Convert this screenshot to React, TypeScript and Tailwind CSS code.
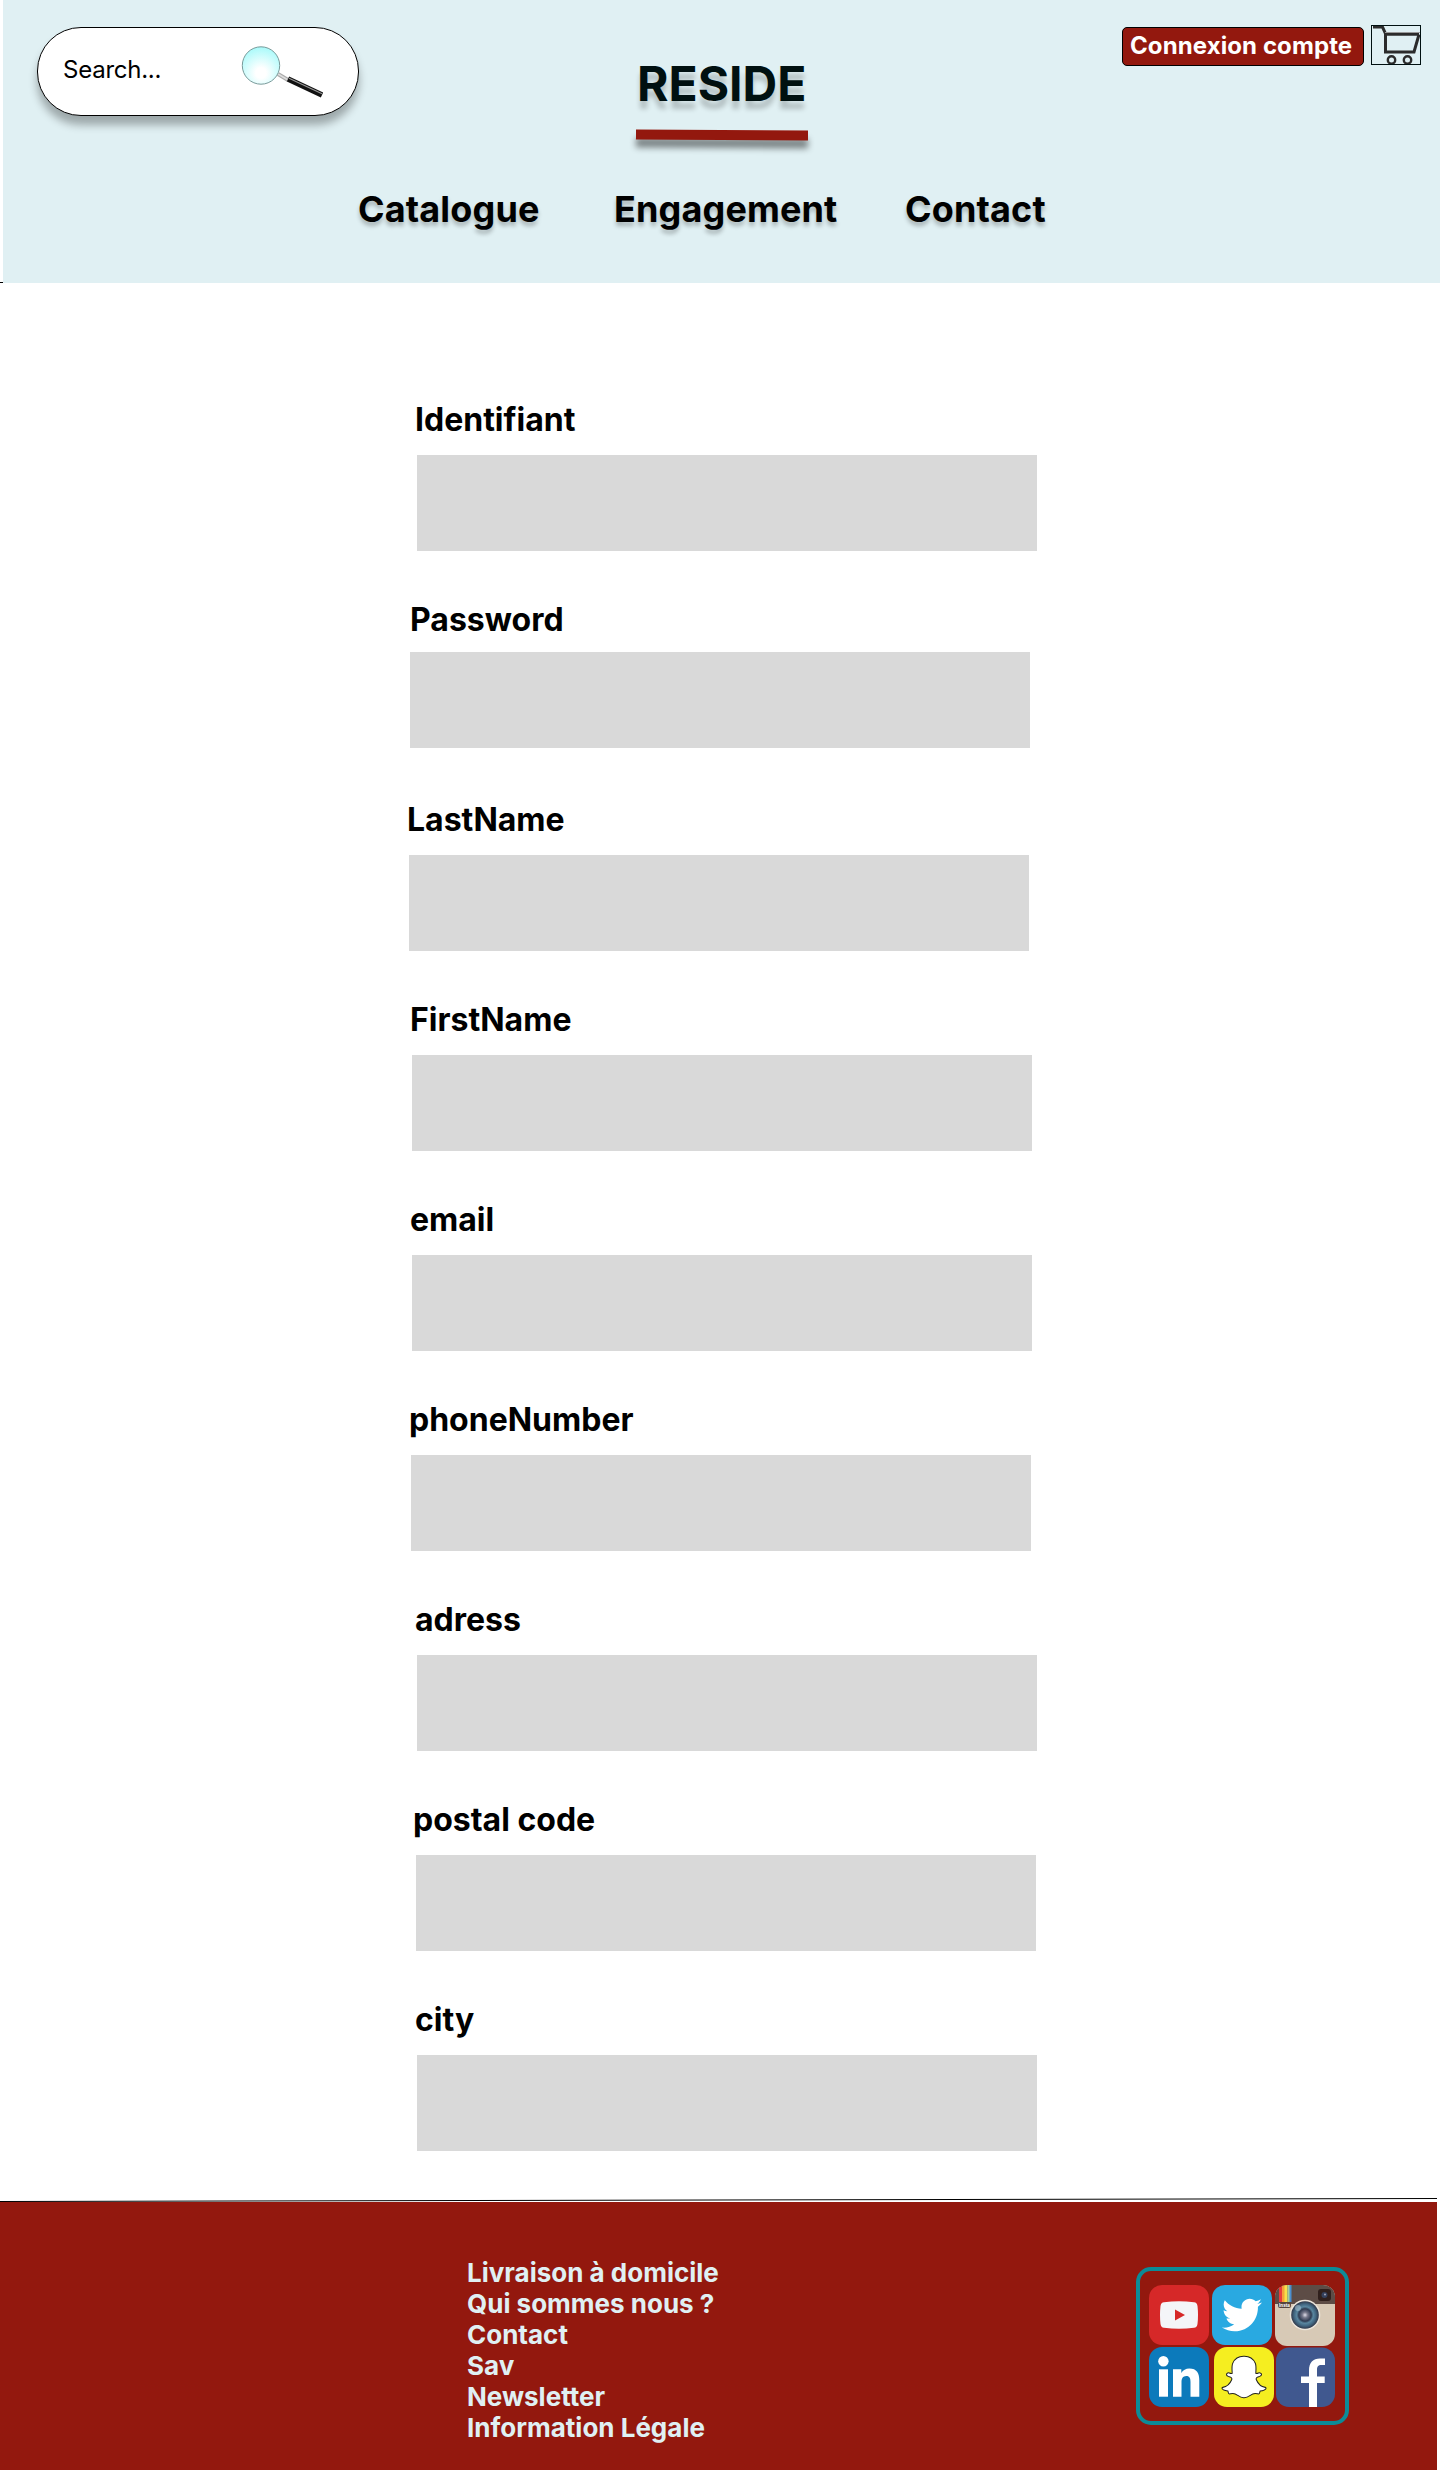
import React from "react";
import { FaTwitter, FaSnapchatGhost } from "react-icons/fa";

const fields = [
  { label: "Identifiant", at: "ml-[415px]", box: "ml-[2px] mt-[15px]" },
  { label: "Password", at: "ml-[410px]", box: "mt-[12px]" },
  { label: "LastName", at: "ml-[407px]", box: "ml-[2px] mt-[15px]" },
  { label: "FirstName", at: "ml-[410px]", box: "ml-[2px] mt-[15px]" },
  { label: "email", at: "ml-[410px]", box: "ml-[2px] mt-[15px]" },
  { label: "phoneNumber", at: "ml-[409px]", box: "ml-[2px] mt-[15px]" },
  { label: "adress", at: "ml-[415px]", box: "ml-[2px] mt-[15px]" },
  { label: "postal code", at: "ml-[413px]", box: "ml-[3px] mt-[15px]" },
  { label: "city", at: "ml-[415px]", box: "ml-[2px] mt-[15px]" },
];

const footerLinks = ["Livraison à domicile", "Qui sommes nous ?", "Contact", "Sav", "Newsletter", "Information Légale"];

function Magnifier() {
  return (
    <svg width="84" height="54" viewBox="0 0 84 54" className="ml-[79px] mt-[17px] shrink-0">
      <defs>
        <radialGradient id="lens" cx="0.5" cy="0.7" r="0.7">
          <stop offset="0.2" stopColor="#fff" />
          <stop offset="1" stopColor="#a8fafa" />
        </radialGradient>
      </defs>
      <path d="M37 29l10 6" stroke="#aaa" strokeWidth="4" />
      <path d="M37 29l10 6" stroke="#ddd" strokeWidth="1.5" />
      <circle cx="20" cy="20.500" r="18.700" fill="url(#lens)" stroke="#7a9a9a" strokeWidth="1" />
      <path d="M47 34l34 16" stroke="#111" strokeWidth="5.4" />
      <path d="M48 33.2l33 15.5" stroke="#999" strokeWidth="1.1" />
    </svg>
  );
}

function Cart() {
  return (
    <svg width="50" height="40" viewBox="0 0 50 40" className="ml-[7px] mt-[25px] shrink-0" fill="none" stroke="#2b2b2b">
      <path d="M2 2h9.500l3 6.500v18.500h28.500l5-17.500" strokeWidth="3" />
      <path d="M14 9h34" strokeWidth="3.500" />
      <path d="M14 7.500h35" stroke="#999" strokeWidth="1" />
      <circle cx="20.500" cy="35" r="3.700" strokeWidth="2.400" />
      <circle cx="36.500" cy="35" r="3.700" strokeWidth="2.400" />
      <rect x="0.500" y="0.500" width="49" height="39" stroke="#001010" />
    </svg>
  );
}

function Instagram() {
  return (
    <svg width="60" height="61" viewBox="0 0 60 61">
      <defs>
        <clipPath id="body"><rect width="60" height="61" rx="12" /></clipPath>
        <radialGradient id="glass">
          <stop offset="0" stopColor="#e0dde8" />
          <stop offset="0.2" stopColor="#77798c" />
          <stop offset="0.45" stopColor="#303c52" />
          <stop offset="0.6" stopColor="#5a87a0" />
          <stop offset="0.8" stopColor="#416580" />
          <stop offset="1" stopColor="#303849" />
        </radialGradient>
      </defs>
      <g clipPath="url(#body)">
        <rect width="60" height="61" fill="#d7c9b6" />
        <rect width="60" height="19" fill="#5d4c46" />
        <rect x="4" width="3" height="17" fill="#e83c3c" />
        <rect x="7" width="3.500" height="17" fill="#f5a13a" />
        <rect x="9.500" width="3" height="17" fill="#f8e04a" />
        <rect x="12.500" width="2.500" height="17" fill="#a9cf9a" />
        <rect x="14.500" width="2" height="17" fill="#4b8fd0" />
        <rect x="3" y="17" width="13" height="6" rx="2" fill="#55443e" />
        <text x="9.500" y="21.700" textAnchor="middle" fontSize="4.500" fontWeight="700" fontFamily="Inter, sans-serif" fill="#fff">Insta</text>
        <rect x="43" y="4" width="13" height="12" rx="3" fill="#30201d" />
        <circle cx="49.500" cy="10" r="3" fill="#34405c" />
        <circle cx="50" cy="9.500" r="1" fill="#a5a5b8" />
        <circle cx="30" cy="30" r="15.300" fill="#ede6dc" />
        <circle cx="30" cy="30" r="13.800" fill="url(#glass)" />
        <circle cx="23" cy="23" r="3" fill="#b6cdda" opacity="0.5" />
      </g>
    </svg>
  );
}

function LinkedIn() {
  return (
    <svg width="60" height="60" viewBox="0 0 60 60" fill="#fff">
      <rect width="60" height="60" rx="13" fill="#0c7abb" />
      <circle cx="14.400" cy="14.300" r="5.200" />
      <rect x="10" y="22.300" width="9" height="27.400" />
      <path d="M24 22.300h8.300v3.700c1.600-2.800 4.600-4.500 8-4.500c7.600 0 10 4.800 10 12v16.200h-8.800V35c0-3.500-.8-6-4.200-6c-3.600 0-4.800 2.800-4.800 6.200v14.500H24z" />
    </svg>
  );
}

function Facebook() {
  return (
    <svg width="59" height="60" viewBox="0 0 59 60" fill="#fff">
      <rect y="0.500" width="59" height="59.500" rx="13" fill="#40588f" />
      <path d="M33 60V36h-8v-6.500h8v-6c0-8 4-12 11-12h5V18h-3.500c-3.500 0-4.500 1.500-4.500 5v6.500h7.700V36H41v24z" />
    </svg>
  );
}

function Socials() {
  return (
    <div className="mt-[65px] h-[158px] w-[213px] rounded-[15px] border-4 border-[#0c8b97] pl-[9px] pt-[14px]">
      <div className="flex gap-[3px]">
        <div className="flex size-[60px] items-center justify-center rounded-[13px] bg-[#d62828]">
          <svg width="38" height="28" viewBox="0 0 38 28">
            <path d="M4 1.200Q19-.5 34 1.200Q37 1.500 37.500 5Q38.500 14 37.500 23Q37 26.500 34 26.800Q19 28.500 4 26.800Q1 26.500.5 23Q-.5 14 .5 5Q1 1.500 4 1.200Z" fill="#f4f5f8" />
            <path d="M15 8.500v11l10-5.500z" fill="#d62828" />
          </svg>
        </div>
        <div className="flex size-[60px] items-center justify-center rounded-[13px] bg-[#29a9e1] text-white">
          <FaTwitter size={40} />
        </div>
        <Instagram />
      </div>
      <div className="mt-[1px] flex">
        <LinkedIn />
        <div className="ml-[4.5px] mr-[2.5px] flex size-[60px] items-center justify-center rounded-[13px] bg-[#f5ee20]">
          <FaSnapchatGhost size={44} color="#fff" stroke="#222" strokeWidth={12} className="overflow-visible" />
        </div>
        <Facebook />
      </div>
    </div>
  );
}

export default function App() {
  return (
    <div className="h-[2470px] w-[1440px] overflow-hidden bg-white font-['Inter',sans-serif] text-black">
      <div className="flex h-[283px]">
        <div className="flex w-[3px] items-end"><div className="h-px w-full bg-black" /></div>
        <header className="w-[1437px] bg-[#e0f0f3]">
          <div className="flex h-[170px] items-start">
            <div className="ml-[34px] mt-[27px] flex h-[89px] w-[322px] items-start rounded-[44px] border border-black bg-white pl-[25px] shadow-[0_9px_8px_rgba(0,0,0,0.3)]">
              <span className="mt-[27px] w-[99px] whitespace-nowrap text-[24px] leading-[29px] tracking-[-0.01em]">Search...</span>
              <Magnifier />
            </div>
            <div className="ml-[277px] w-[172px]">
              <h1 className="ml-[1px] mt-[55px] whitespace-nowrap text-[48px] font-bold leading-[58px] text-[#001010] [text-shadow:0_8px_5px_rgba(0,0,0,0.2)]">RESIDE</h1>
              <div className="mt-[17px] h-[10px] w-[172px] rotate-[0.3deg] bg-[#93180e] shadow-[0_8px_6px_rgba(0,0,0,0.45)]" />
            </div>
            <button className="ml-[314px] mt-[27px] h-[39px] w-[242px] shrink-0 whitespace-nowrap rounded-[5px] border border-black bg-[#93180e] pb-[2px] pl-[7px] text-left text-[24px] font-bold leading-[35px] tracking-[0.004em] text-white">Connexion compte</button>
            <Cart />
          </div>
          <nav className="flex pl-[355px] pt-[19px] text-[36px] font-bold leading-[40px] tracking-[0.004em] [text-shadow:0_4px_4px_rgba(0,0,0,0.25)]">
            <span className="w-[256px]">Catalogue</span>
            <span className="w-[291px]">Engagement</span>
            <span>Contact</span>
          </nav>
        </header>
      </div>
      <main className="h-[1915px] pt-[117px]">
        {fields.map((f) => (
          <label key={f.label} className={`block h-[200px] ${f.at}`}>
            <span className="block h-[40px] text-[32px] font-bold leading-[39px]">{f.label}</span>
            <input className={`block h-[96px] w-[620px] bg-[#d9d9d9] ${f.box}`} />
          </label>
        ))}
      </main>
      <svg width="1440" height="4" viewBox="0 0 1440 4" className="block">
        <path d="M0 3.500L1437 .5" stroke="#000" />
      </svg>
      <footer className="flex h-[268px] w-[1437px] items-start bg-[#93180e]">
        <ul className="ml-[467px] mt-[55px] w-[669px] text-[26px] font-bold leading-[31px] text-[#e0f0f3]">
          {footerLinks.map((t) => <li key={t}>{t}</li>)}
        </ul>
        <Socials />
      </footer>
    </div>
  );
}
